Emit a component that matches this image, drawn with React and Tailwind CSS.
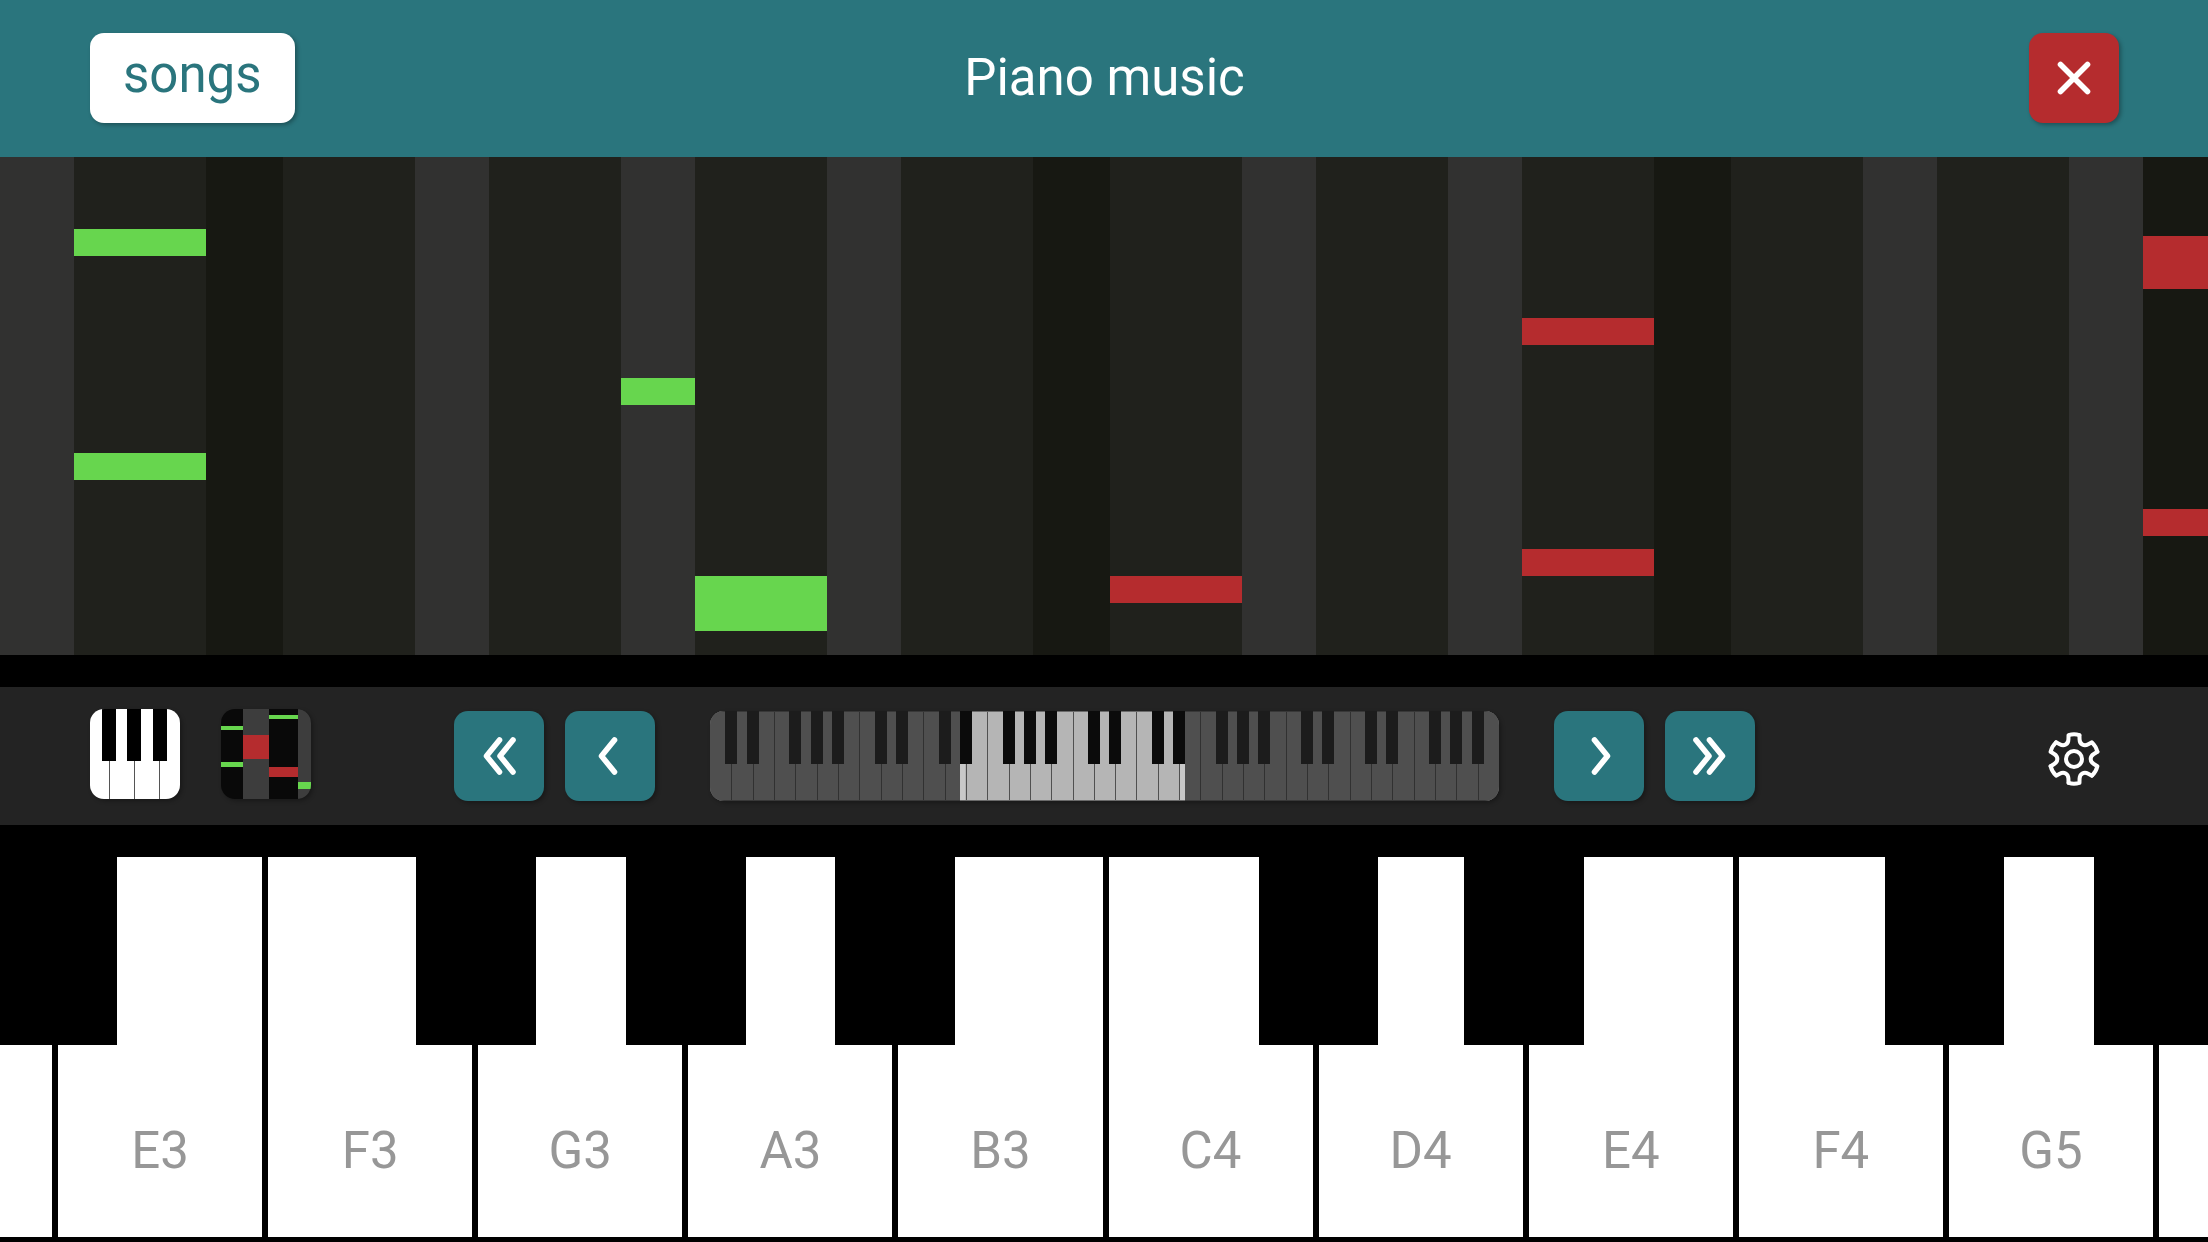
import React from 'react';
import { clsx } from 'clsx';

const ROLL_HEIGHT = 498;
const BOARD_WIDTH = 2208;

const LANE_STYLES = {
    gray: 'grow-74 bg-[#313130]',
    dark: 'grow-132 bg-[#20211c]',
    deep: 'grow-77 bg-[#171812]',
    edge: 'grow-65 bg-[#171812]',
};

// one entry per lane, notes are measured from the top of the roll
const LANES = [
    { kind: 'gray' },
    { kind: 'dark', notes: [{ hand: 'left', top: 72, length: 27 }, { hand: 'left', top: 296, length: 27 }] },
    { kind: 'deep' },
    { kind: 'dark' },
    { kind: 'gray' },
    { kind: 'dark' },
    { kind: 'gray', notes: [{ hand: 'left', top: 221, length: 27 }] },
    { kind: 'dark', notes: [{ hand: 'left', top: 419, length: 55 }] },
    { kind: 'gray' },
    { kind: 'dark' },
    { kind: 'deep' },
    { kind: 'dark', notes: [{ hand: 'right', top: 419, length: 27 }] },
    { kind: 'gray' },
    { kind: 'dark' },
    { kind: 'gray' },
    { kind: 'dark', notes: [{ hand: 'right', top: 161, length: 27 }, { hand: 'right', top: 392, length: 27 }] },
    { kind: 'deep' },
    { kind: 'dark' },
    { kind: 'gray' },
    { kind: 'dark' },
    { kind: 'gray' },
    { kind: 'edge', notes: [{ hand: 'right', top: 79, length: 53 }, { hand: 'right', top: 352, length: 27 }] },
];

const WHITE_KEYS = ['E3', 'F3', 'G3', 'A3', 'B3', 'C4', 'D4', 'E4', 'F4', 'G5'];

const BLACK_KEYS = [
    { name: 'D#3', left: 0, width: 117 },
    { name: 'F#3', left: 416, width: 120 },
    { name: 'G#3', left: 626, width: 120 },
    { name: 'A#3', left: 835, width: 120 },
    { name: 'C#4', left: 1259, width: 119 },
    { name: 'D#4', left: 1464, width: 120 },
    { name: 'F#4', left: 1885, width: 119 },
    { name: 'G#5', left: 2094, width: 114 },
];

const MINI_WHITE_COUNT = 37;
const MINI_BLACK = [1, 2, 4, 5, 6, 8, 9, 11, 12, 14, 15, 16, 18, 19, 21, 22, 24, 25, 26, 28, 29, 31, 32, 34, 35, 36];

const percent = (value, total) => `${(value / total) * 100}%`;

const SquareButton = ({ label, className, children }) => (
    <button
        type="button"
        aria-label={label}
        className={clsx(
            'w-[90px] h-[90px] shrink-0 rounded-[14px] overflow-hidden cursor-pointer shadow-[2px_2px_4px_rgba(0,0,0,0.3)]',
            className
        )}
    >
        {children}
    </button>
);

const StrokeIcon = ({ d }) => (
    <svg viewBox="0 0 90 90" className="w-full h-full" fill="none" stroke="#fff" strokeWidth="5.6" strokeLinecap="round" strokeLinejoin="round">
        <path d={d} />
    </svg>
);

const KeysIcon = () => (
    <svg viewBox="0 0 90 90" className="w-full h-full" shapeRendering="crispEdges">
        <rect width="90" height="90" fill="#fff" />
        {[19, 44, 69].map((x) => <rect key={x} x={x} y="50" width="1" height="40" fill="#555" />)}
        {[12, 37, 63].map((x) => <rect key={x} x={x} y="0" width="14" height="52" fill="#000" />)}
    </svg>
);

const RollIcon = () => (
    <svg viewBox="0 0 90 90" className="w-full h-full" shapeRendering="crispEdges">
        <rect width="90" height="90" fill="#090909" />
        <rect x="22" width="26" height="90" fill="#3d3d3d" />
        <rect x="77" width="13" height="90" fill="#3d3d3d" />
        <rect x="0" y="17" width="22" height="4" fill="#67d64e" />
        <rect x="0" y="53" width="22" height="5" fill="#67d64e" />
        <rect x="22" y="26" width="26" height="24" fill="#b52c2e" />
        <rect x="48" y="6" width="29" height="4" fill="#67d64e" />
        <rect x="48" y="58" width="29" height="10" fill="#b52c2e" />
        <rect x="77" y="73" width="13" height="7" fill="#67d64e" />
    </svg>
);

const GearIcon = () => (
    <svg viewBox="-28 -28 56 56" className="w-14 h-14" fill="none" stroke="#fff" strokeWidth="4" strokeLinecap="round" strokeLinejoin="round">
        <circle r="8" />
        {[0, 60, 120, 180, 240, 300].map((angle) => (
            <path
                key={angle}
                transform={`rotate(${angle})`}
                d="M23.4 -7.2 L19.8 -5 C15.6 -2.4 15.6 2.4 19.8 5 L23.4 7.2 Q22 12.8 18 16.6"
            />
        ))}
    </svg>
);

const MiniKeyboard = () => {
    const step = 789 / MINI_WHITE_COUNT;
    const lines = Array.from({ length: MINI_WHITE_COUNT - 1 }, (_, i) => Math.round((i + 1) * step));

    return (
        <button
            type="button"
            aria-label="Keyboard range"
            className="flex-1 h-[90px] rounded-[14px] overflow-hidden cursor-pointer shadow-[2px_2px_4px_rgba(0,0,0,0.3)]"
        >
            <svg viewBox="0 0 789 90" preserveAspectRatio="none" className="w-full h-full" shapeRendering="crispEdges">
                <rect width="789" height="90" fill="#b5b5b5" />
                {lines.map((x) => <rect key={x} x={x} width="1" height="90" fill="#505050" />)}
                <rect x="250" y="50" width="5" height="39" fill="#c8c8c8" />
                <rect x="470" y="50" width="5" height="39" fill="#c8c8c8" />
                <rect width="789" height="1" fill="#6a6a6a" />
                <rect y="89" width="789" height="1" fill="#6a6a6a" />
                {MINI_BLACK.map((k) => (
                    <rect key={k} x={Math.round(k * step) - 6} width="12" height="53" fill="#0b0b0b" />
                ))}
                {/* everything outside the visible range is dimmed */}
                <rect width="250" height="90" fill="#232323" fillOpacity="0.7" />
                <rect x="475" width="314" height="90" fill="#232323" fillOpacity="0.7" />
            </svg>
        </button>
    );
};

const Header = () => (
    <header className="h-[157px] shrink-0 pl-[90px] pr-[89px] pb-0.5 grid grid-cols-[1fr_auto_1fr] items-center bg-[#2a757d]">
        <button
            type="button"
            className="justify-self-start h-[90px] px-[33px] pb-1.5 rounded-[14px] bg-white text-[#2a757d] text-[51px] leading-none cursor-pointer shadow-[2px_2px_4px_rgba(0,0,0,0.3)]"
        >
            songs
        </button>
        <h1 className="text-[51px] leading-none text-white">Piano music</h1>
        <SquareButton label="Close" className="justify-self-end bg-[#b52c2e]">
            <StrokeIcon d="M31.5 31.5 L58.5 58.5 M58.5 31.5 L31.5 58.5" />
        </SquareButton>
    </header>
);

const NoteRoll = () => (
    <main className="flex-[498] min-h-0 flex overflow-hidden">
        {LANES.map((lane, i) => (
            <div key={i} className={clsx('relative basis-0', LANE_STYLES[lane.kind])}>
                {lane.notes?.map((note) => (
                    <div
                        key={note.top}
                        className={clsx('absolute inset-x-0', note.hand === 'left' ? 'bg-[#67d64e]' : 'bg-[#b52c2e]')}
                        style={{ top: percent(note.top, ROLL_HEIGHT), height: percent(note.length, ROLL_HEIGHT) }}
                    />
                ))}
            </div>
        ))}
    </main>
);

const Toolbar = () => (
    <nav className="h-[138px] shrink-0 my-8 pl-[90px] pr-[89px] flex items-center justify-between bg-[#232323]">
        <div className="w-[364px] pb-1 flex gap-[41px]">
            <SquareButton label="Show keys"><KeysIcon /></SquareButton>
            <SquareButton label="Show note roll"><RollIcon /></SquareButton>
        </div>
        <div className="flex-1 flex items-center gap-[55px]">
            <div className="flex gap-[21px]">
                <SquareButton label="Octave down" className="bg-[#2a757d]">
                    <StrokeIcon d="M45.5 29 L32.5 45 L45.5 61 M59 29 L46 45 L59 61" />
                </SquareButton>
                <SquareButton label="Key down" className="bg-[#2a757d]">
                    <StrokeIcon d="M49.5 29 L36.5 45 L49.5 61" />
                </SquareButton>
            </div>
            <MiniKeyboard />
            <div className="flex gap-[21px]">
                <SquareButton label="Key up" className="bg-[#2a757d]">
                    <StrokeIcon d="M40.5 29 L53.5 45 L40.5 61" />
                </SquareButton>
                <SquareButton label="Octave up" className="bg-[#2a757d]">
                    <StrokeIcon d="M31 29 L44 45 L31 61 M44.5 29 L57.5 45 L44.5 61" />
                </SquareButton>
            </div>
        </div>
        <div className="w-[364px] flex justify-end">
            <button type="button" aria-label="Settings" className="w-[90px] h-[90px] pt-1.5 flex items-center justify-center cursor-pointer">
                <GearIcon />
            </button>
        </div>
    </nav>
);

const Keyboard = () => (
    <section aria-label="Piano keyboard" className="relative flex-[380] min-h-0 mb-[5px] flex gap-1.5">
        <button type="button" aria-label="D3" className="grow-52 basis-0 bg-white" />
        {WHITE_KEYS.map((name) => (
            <button
                key={name}
                type="button"
                className="grow-204 basis-0 min-w-0 pb-[61px] flex items-end justify-center bg-white text-[#979797] text-[51px] leading-[51px] cursor-pointer"
            >
                {name}
            </button>
        ))}
        <button type="button" aria-label="A5" className="grow-49 basis-0 bg-white" />
        {BLACK_KEYS.map((key) => (
            <button
                key={key.name}
                type="button"
                aria-label={key.name}
                className="absolute top-0 h-[49.5%] bg-black cursor-pointer"
                style={{ left: percent(key.left, BOARD_WIDTH), width: percent(key.width, BOARD_WIDTH) }}
            />
        ))}
    </section>
);

const App = () => {
    return (
        <div className="h-screen flex flex-col overflow-hidden bg-black font-[Roboto,sans-serif]">
            <Header />
            <NoteRoll />
            <Toolbar />
            <Keyboard />
        </div>
    );
};

export default App;
